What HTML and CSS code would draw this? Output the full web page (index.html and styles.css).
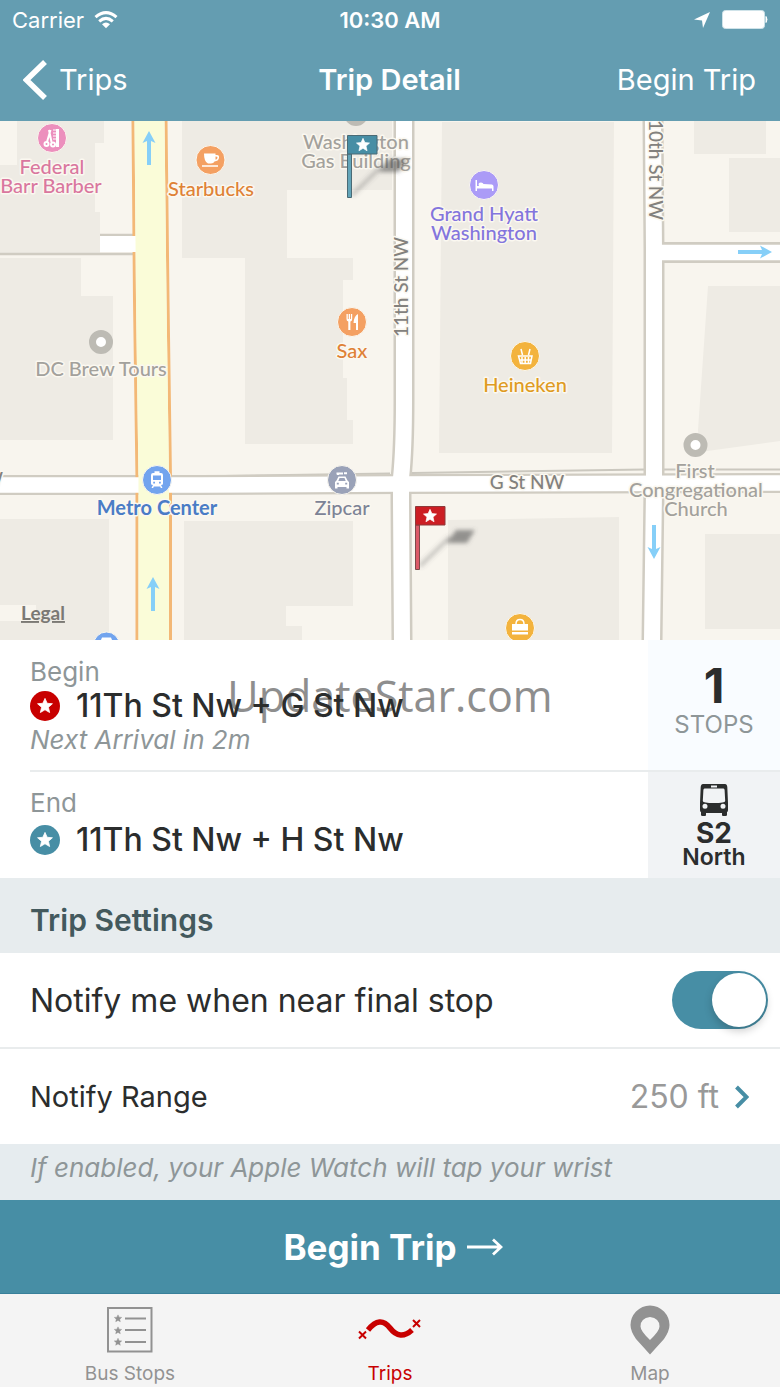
FILE: index.html
```html
<!DOCTYPE html>
<html lang="en">
<head>
<meta charset="utf-8">
<meta name="viewport" content="width=device-width, initial-scale=1">
<title>Trip Detail</title>
<link rel="stylesheet" href="styles.css">
</head>
<body>
<svg class="defs" width="0" height="0" aria-hidden="true">
  <symbol id="star" viewBox="-10 -10 20 20"><path d="M0-9.5 2.7-3.4 9.3-2.8 4.3 1.6 5.8 8.2 0 4.7-5.8 8.2-4.3 1.6-9.3-2.8-2.7-3.4Z" fill="currentColor" stroke="currentColor" stroke-linejoin="round"/></symbol>
</svg>

<header class="header">
  <div class="status">
    <div class="status-left">
      <span>Carrier</span>
      <svg class="wifi" viewBox="0 0 24 18" aria-label="Wi-Fi"><g fill="none" stroke="#fff" stroke-width="3"><path d="M1.5 6.2Q12-3 22.5 6.2"/><path d="M5.2 10.3Q12 4.4 18.8 10.3"/></g><path d="M8 13.2Q12 9.8 16 13.2L12 17.3Z" fill="#fff"/></svg>
    </div>
    <time class="clock">10:30 AM</time>
    <div class="status-right">
      <svg class="locate" viewBox="0 0 16 16" aria-hidden="true"><path d="M16 0 9 16 8 8.4 0 7.5Z" fill="#fff"/></svg>
      <svg class="battery" viewBox="0 0 46 20" aria-label="Battery full"><rect x=".5" y=".5" width="42" height="18" rx="3" fill="#fff" stroke="#cfe3e9"/><path d="M44 6.5Q46 9.500 44 12.500Z" fill="#fff" stroke="#fff"/></svg>
    </div>
  </div>
  <div class="nav">
    <button class="nav-btn back" type="button"><svg class="chev" viewBox="0 0 24 40" aria-hidden="true"><path d="M22 2 3.500 20 22 38" fill="none" stroke="#fff" stroke-width="5.500"/></svg>Trips</button>
    <h1 class="title">Trip Detail</h1>
    <button class="nav-btn begin" type="button">Begin Trip</button>
  </div>
</header>

<main>
  <svg class="map" viewBox="0 121 780 519" preserveAspectRatio="xMidYMid slice">
    <defs>
      <filter id="soft" x="-30%" y="-50%" width="160%" height="200%"><feGaussianBlur stdDeviation="2"/></filter>
      <g id="flag-shadow" filter="url(#soft)"><path d="M5 60 35 31" stroke="#555" stroke-opacity=".3" stroke-width="4"/><path d="M41 24H60L52 37H32Z" fill="#555" fill-opacity=".6"/></g>
      <path id="arrow" d="M0-17 6.500-5 2-7V17H-2V-7L-6.500-5Z" fill="#86cff8"/>
    </defs>
    <rect x="0" y="121" width="780" height="520" fill="#f8f5ee"/>
    <g fill="#eeebe4">
      <path d="M17 121H104V143H95V212H100V253H0V165H17Z"/>
      <path d="M0 258H81V296H113V440H0Z"/>
      <path d="M182 121H392V190H287V258H353V280H343V378H347V420H353V444H245V258H182Z"/>
      <path d="M442 122H614L612 453H439Z"/>
      <path d="M694 121H766V154H694ZM729 158H780V232H729ZM708 286H780V441L700 452 698 430Z"/>
      <path d="M0 519H109V641H0V621H36V605H0Z"/>
      <path d="M184 521H353V606H286V626H302V641H184Z"/>
      <path d="M448 520 619 517V641H448ZM705 534H780V629H705Z"/>
    </g>
    <path d="M160 477 390 473.500M412 473 645 469.500M663 469.500H780" fill="none" stroke="#cbc8bf" stroke-width="2"/>
    <g fill="none" stroke="#d0ccc2">
      <path d="M100 235H134M0 254H134" stroke-width="2.500"/>
      <path d="M0 485H200L400 484 780 483" stroke-width="20"/>
      <path d="M404 121V400Q404 450 401 478V500L402 641" stroke-width="21"/>
      <path d="M653 121 654 250V490L652 641" stroke-width="21"/>
      <path d="M654 252.500H780" stroke-width="21"/>
    </g>
    <path d="M133 121 134.500 300 137 480V641M166 121 168 300 170.500 480V641" fill="none" stroke="#f3b876" stroke-width="3"/>
    <g fill="none" stroke="#fff">
      <path d="M100 244H137" stroke-width="16"/>
      <path d="M0 485H200L400 484 780 483" stroke-width="15.500"/>
      <path d="M404 121V400Q404 450 401 478V500L402 641" stroke-width="16"/>
      <path d="M653 121 654 250V490L652 641" stroke-width="16"/>
      <path d="M654 252.500H780" stroke-width="15.500"/>
    </g>
    <path d="M134.500 121H164.500L166.500 300 169 480V641H138.500V480L136 300Z" fill="#fafcd8"/>

    <use href="#arrow" x="149" y="148"/>
    <use href="#arrow" x="153" y="594"/>
    <use href="#arrow" transform="translate(755 252)rotate(90)"/>
    <use href="#arrow" transform="translate(654 542)rotate(180)"/>

    <g stroke="#fbf8f0" stroke-width="1">
      <circle cx="52" cy="138" r="14.500" fill="#ec8fbd"/>
      <circle cx="210.500" cy="160" r="14.500" fill="#f4a062"/>
      <circle cx="352" cy="322" r="14.500" fill="#f4a062"/>
      <circle cx="484" cy="185" r="14.500" fill="#ab9bf7"/>
      <circle cx="525" cy="356" r="14.500" fill="#f3b33d"/>
      <circle cx="520" cy="628" r="14.500" fill="#f3b33d"/>
      <circle cx="157" cy="480" r="14.500" fill="#72a4ee"/>
      <circle cx="342" cy="480" r="14.500" fill="#9aa2b8"/>
      <circle cx="106.500" cy="645" r="13" fill="#72a4ee"/>
    </g>
    <g fill="#fff" stroke="#bdbbb4" stroke-width="7">
      <circle cx="101" cy="342" r="8.500"/><circle cx="695.500" cy="445" r="8.500"/><circle cx="356" cy="114" r="8.500"/>
    </g>
    <path d="M100.500 641 102 637.500H111L112.500 641Z" fill="#fff"/>
    <!-- scissors and comb -->
    <g fill="none" stroke="#fff" stroke-width="2"><path d="M49 130 51.500 142M50.500 130 47 142"/><circle cx="46.500" cy="144" r="2"/><circle cx="53" cy="144.500" r="2"/><path d="M57.500 129V147" stroke-width="3"/><path d="M53 130H57M53 133H57M53 136H57M53 139H57" stroke-width="1"/></g>
    <!-- cup -->
    <path d="M204 153.500H215.500V155H217Q219.500 155 219 158 218.500 161 214.500 161.500 213.500 163.500 211 163.500H208Q204 162 204 153.500ZM215.500 156.500V159.800Q217.500 159.500 217.500 157.500 217.500 156.500 215.500 156.500ZM202 165.200H218V166.700H202Z" fill="#fff"/>
    <!-- fork and knife -->
    <g fill="#fff"><path d="M346.500 314H347.800V319H348.700V314H350V319H350.900V314H352.200V319Q352.200 321 350.400 321.500V330H348.300V321.500Q346.500 321 346.500 319ZM358 314V330H356V323H353.500Q354 316 358 314Z"/></g>
    <!-- bed -->
    <path d="M475.500 180H477V186H479Q477.500 182.500 481 182.500 483 182.500 483.500 184L492 184.500Q493.500 185 493.500 186.500V191H492V188.500H477V191H475.500Z" fill="#fff"/>
    <!-- basket -->
    <g fill="none" stroke="#fff" stroke-width="1.500"><path d="M521 349 522.500 355M530 349 528.500 355M518.500 356H532L530.500 363.500H520.500ZM522 357V363M525.200 357V363M528.500 357V363M520 360H531"/></g>
    <!-- briefcase -->
    <path d="M512 624H528V630.500H512ZM512 632H528V634.500H512Z" fill="#fff"/><path d="M516 624Q516 619.500 520 619.500T524 624" fill="none" stroke="#fff" stroke-width="1.500"/>
    <!-- train -->
    <path d="M154.500 471.200H159.500V473H161Q163 473 163 475V483.500Q163 485 161 485L162.500 488H160.800L160.200 486.600H153.800L153.200 488H151.500L153 485Q151 485 151 483.500V475Q151 473 153 473H154.500ZM153 475.500V480H161V475.500ZM153.200 481.800V483.500H155V481.800ZM159 481.800V483.500H160.800V481.800Z" fill="#fff" fill-rule="evenodd"/>
    <!-- rental car -->
    <path d="M338.500 476.500H345.500L347.500 480.500 349 482V488.500H346.500V487H337.500V488.500H335V482L336.500 480.500ZM339.500 478 338.300 481H345.700L344.500 478ZM336.800 482.800V484.500H338.800V482.800ZM345.200 482.800V484.500H347.200V482.800Z" fill="#fff" fill-rule="evenodd"/><path d="M336.500 473.500H343M338 473.500V475M344 473.200H347" stroke="#fff" stroke-width="2" fill="none"/>

    <g class="poi" text-anchor="middle">
      <g fill="#d9779f"><text x="52" y="174">Federal</text><text x="51" y="193">Barr Barber</text></g>
      <g fill="#df8136"><text x="211" y="196">Starbucks</text><text x="352" y="358">Sax</text></g>
      <g fill="#a3a19c"><text x="356" y="149">Washington</text><text x="356" y="168">Gas Building</text><text x="101" y="376">DC Brew Tours</text><text x="695" y="478">First</text><text x="696" y="497">Congregational</text><text x="696" y="516">Church</text></g>
      <g fill="#8375dd"><text x="484" y="221">Grand Hyatt</text><text x="484" y="240">Washington</text></g>
      <text x="525" y="392" fill="#df9b22">Heineken</text>
      <text x="157" y="515" fill="#4a7cc6" class="strong">Metro Center</text>
      <text x="342" y="515" fill="#7d8396">Zipcar</text>
      <g fill="#83817d" class="road"><text x="527" y="489">G St NW</text><text transform="translate(408 287)rotate(-90)">11th St NW</text><text transform="translate(649 170)rotate(90)">10th St NW</text><text x="-7" y="486">W</text></g>
    </g>
    <a href="#legal"><text class="legal" x="21" y="620">Legal</text></a>

    <g transform="translate(347 135)">
      <use href="#flag-shadow"/>
      <path d="M.500 19H4.500V62.500H.500Z" fill="#62a4b8" stroke="#4a6a75"/><path d="M.500 .500H30V19H.500Z" fill="#478ea5" stroke="#4a6a75"/><use href="#star" x="9" y="3" width="14" height="14" color="#fff"/>
    </g>
    <g transform="translate(415 506)">
      <use href="#flag-shadow"/>
      <path d="M.500 19H4.500V63.500H.500Z" fill="#dc5a68" stroke="#7d4a4a"/><path d="M.500 .500H30V19H.500Z" fill="#cc1e24" stroke="#8d3a3a"/><use href="#star" x="8" y="3" width="14" height="14" color="#fff"/>
    </g>
  </svg>

  <section class="trip">
    <div class="watermark">UpdateStar.com</div>
    <div class="stop">
      <div class="label">Begin</div>
      <div class="name"><span class="dot red"><svg viewBox="-10 -10 20 20" aria-hidden="true"><use href="#star" x="-10" y="-10" width="20" height="20"/></svg></span>11Th St Nw + G St Nw</div>
      <div class="next">Next Arrival in 2m</div>
    </div>
    <div class="side count"><strong>1</strong><span>STOPS</span></div>
    <div class="stop end">
      <div class="label">End</div>
      <div class="name"><span class="dot teal"><svg viewBox="-10 -10 20 20" aria-hidden="true"><use href="#star" x="-10" y="-10" width="20" height="20"/></svg></span>11Th St Nw + H St Nw</div>
    </div>
    <div class="side route">
      <svg class="bus" viewBox="0 0 28 32" aria-hidden="true"><path d="M3 0H25Q27 0 27.300 3L28 19V26Q28 28 27 28V31Q27 32 25.500 32H23Q22 32 22 31V29H6V31Q6 32 5 32H2.500Q1 32 1 31V28Q0 28 0 26V19L.700 3Q1 0 3 0ZM11 1.500V3.500H17V1.500ZM4.500 4.500Q3.500 4.500 3.400 6L2.800 17Q2.800 19 14 19T25.200 17L24.600 6Q24.500 4.500 23.500 4.500ZM5 19.700A2.500 2.500 0 1 0 5 24.700 2.500 2.500 0 1 0 5 19.700ZM23 19.700A2.500 2.500 0 1 0 23 24.700 2.500 2.500 0 1 0 23 19.700Z" fill="#2b2d2d" fill-rule="evenodd"/></svg>
      <strong>S2</strong><span>North</span>
    </div>
  </section>

  <section>
    <h2 class="section-title">Trip Settings</h2>
    <div class="row">
      <label for="notify">Notify me when near final stop</label>
      <input class="switch" id="notify" type="checkbox" role="switch" checked>
    </div>
    <button class="row range" type="button">
      <span>Notify Range</span>
      <span class="value">250 ft<svg class="more" viewBox="0 0 14 24" aria-hidden="true"><path d="M1.500 2 11.500 12 1.500 22" fill="none" stroke="#478ea5" stroke-width="4"/></svg></span>
    </button>
    <p class="note">If enabled, your Apple Watch will tap your wrist</p>
  </section>
  <button class="cta" type="button">Begin Trip<svg class="arrow" viewBox="0 0 36 18" aria-hidden="true"><path d="M0 9H34M26 1.500 34 9 26 16.500" fill="none" stroke="#fff" stroke-width="2.800"/></svg></button>
</main>

<nav class="tabs">
  <a class="tab" href="#stops">
    <svg class="tab-icon" viewBox="0 0 64 50" aria-hidden="true"><rect x="10" y="3" width="43.500" height="43.500" fill="none" stroke="#929292" stroke-width="2"/><path d="M27 13.500H48M27 25H48M27 37H48" stroke="#929292" stroke-width="2"/><g color="#929292"><use href="#star" x="16" y="9.500" width="8" height="8"/><use href="#star" x="16" y="21.500" width="8" height="8"/><use href="#star" x="16" y="33" width="8" height="8"/></g></svg>
    <span>Bus Stops</span>
  </a>
  <a class="tab active" href="#trips" aria-current="page">
    <svg class="tab-icon" viewBox="0 0 64 50" aria-hidden="true"><path d="M10 25Q22 10 32 23T54 25" fill="none" stroke="#c80000" stroke-width="5.500"/><path d="M1 26.500 8 33.500M8 26.500 1 33.500M55 15 62 22M62 15 55 22" stroke="#c80000" stroke-width="2"/></svg>
    <span>Trips</span>
  </a>
  <a class="tab" href="#map">
    <svg class="tab-icon" viewBox="0 0 64 50" aria-hidden="true"><path d="M32 .500Q40 .500 46 6.500 51.500 12.500 51.500 20 51.500 26 46 34L32 49.500 18 34Q12.500 26 12.500 20 12.500 12.500 18 6.500 24 .500 32 .500ZM32 12Q22.500 13 22.500 21.500 22.500 26 32 35 41.500 26 41.500 21.500 41.500 13 32 12Z" fill="#929292" fill-rule="evenodd"/></svg>
    <span>Map</span>
  </a>
</nav>
</body>
</html>
```
FILE: styles.css
```css
* { box-sizing: border-box; }
body { margin: 0; background: #fff; color: #2b2d2d; font-family: Inter, "Liberation Sans", sans-serif; }
button { font: inherit; color: inherit; background: none; border: 0; padding: 0; margin: 0; text-align: left; cursor: pointer; }
h1, h2, p { margin: 0; }
svg { display: block; }
.defs { position: absolute; }

.header { background: #649db1; color: #fff; }
.status { display: grid; grid-template-columns: 1fr auto 1fr; align-items: center; height: 40px; padding: 0 12px; font-size: 22px; }
.status-left { display: flex; align-items: center; gap: 10px; }
.status-right { display: flex; align-items: center; justify-content: flex-end; gap: 12px; }
.clock { font-weight: 600; }
.wifi { width: 24px; height: 18px; }
.locate { width: 16px; height: 16px; }
.battery { width: 46px; height: 20px; }
.nav { display: grid; grid-template-columns: 1fr auto 1fr; align-items: center; height: 81px; padding: 0 24px 2px 23px; font-size: 29px; }
.nav-btn { display: flex; align-items: center; gap: 12px; }
.begin { justify-self: end; }
.chev { width: 24px; height: 40px; }
.title { font-size: 29px; font-weight: 600; }

.map { width: 100%; height: auto; }
.poi text { font-family: Lato, "Open Sans", sans-serif; font-size: 20px; font-weight: 500; stroke: #fbf8f0; stroke-width: 3px; stroke-linejoin: round; paint-order: stroke; }
.poi .strong { font-weight: 700; }
.poi .road text { font-size: 19px; }
.legal { font-family: Lato, "Open Sans", sans-serif; font-size: 19px; font-weight: 700; fill: #7b7974; text-decoration: underline; }

.trip { position: relative; z-index: 0; display: grid; grid-template-columns: 1fr 132px; }
.watermark { position: absolute; z-index: -1; top: 28px; left: 0; right: 0; text-align: center; font: 400 43px/56px "Open Sans", "Noto Sans", sans-serif; color: #8e8e8e; }
.stop { padding: 16px 0 14px 30px; }
.stop.end { display: grid; align-content: start; gap: 3px; margin-left: 30px; padding-top: 15px; padding-left: 0; border-top: 2px solid #e9eced; }
.label, .next { font-size: 26px; line-height: 32px; color: #8e9698; }
.next { font-style: italic; }
.name { display: flex; align-items: center; gap: 16px; font-size: 32px; line-height: 36px; font-weight: 500; }
.dot { display: grid; place-items: center; width: 30px; height: 30px; border-radius: 50%; color: #fff; }
.dot svg { width: 16px; height: 16px; }
.red { background: #c80000; }
.teal { background: #478ea5; }
.side { display: flex; flex-direction: column; align-items: center; }
.count { padding-top: 19px; background: #f9fcff; color: #8e9698; font-size: 24px; line-height: 24px; }
.count strong { font-size: 48px; line-height: 54px; font-weight: 700; color: #2b2d2d; }
.route { min-height: 108px; padding-top: 12px; border-top: 2px solid #e9eced; background: #f1f3f5; font-size: 23px; line-height: 22px; font-weight: 600; }
.route strong { padding-top: 4px; font-size: 28px; line-height: 26px; font-weight: 700; }
.bus { width: 28px; height: 32px; }

.section-title { padding: 22px 30px 13px; background: #e7ecee; color: #43595d; font-size: 30px; line-height: 40px; font-weight: 600; }
.row { display: flex; align-items: center; justify-content: space-between; width: 100%; height: 96px; padding: 0 12px 0 30px; border-bottom: 2px solid #e9eced; font-size: 32px; }
.range { height: 95px; padding-right: 31px; border-bottom: 0; font-size: 29px; }
.value { display: flex; align-items: center; gap: 16px; color: #999; font-size: 32px; }
.more { width: 14px; height: 24px; }
.switch { appearance: none; display: flex; justify-content: flex-end; width: 96px; height: 58px; margin: 0; padding: 2px; border-radius: 29px; background: #478ea5; cursor: pointer; }
.switch::before { content: ""; width: 54px; height: 54px; border-radius: 50%; background: #fff; box-shadow: 0 4px 8px rgba(0, 0, 0, .2); }
.switch:not(:checked) { justify-content: flex-start; background: #ccc; }
.note { padding: 8px 30px 16px; background: #e6ecef; color: #8e9698; font-size: 26px; line-height: 32px; font-style: italic; }
.cta { display: flex; align-items: center; justify-content: center; gap: 10px; width: 100%; height: 94px; padding-left: 6px; background: #478ea5; border-bottom: 1px solid #38809a; color: #fff; font-size: 35px; font-weight: 700; }
.arrow { width: 36px; height: 18px; }

.tabs { display: grid; grid-template-columns: repeat(3, 1fr); background: #f4f4f4; }
.tab { display: flex; flex-direction: column; align-items: center; gap: 7px; padding: 11px 0; color: #929292; font-size: 19px; line-height: 24px; text-decoration: none; }
.tab.active { color: #c80000; }
.tab-icon { width: 64px; height: 50px; }
```
